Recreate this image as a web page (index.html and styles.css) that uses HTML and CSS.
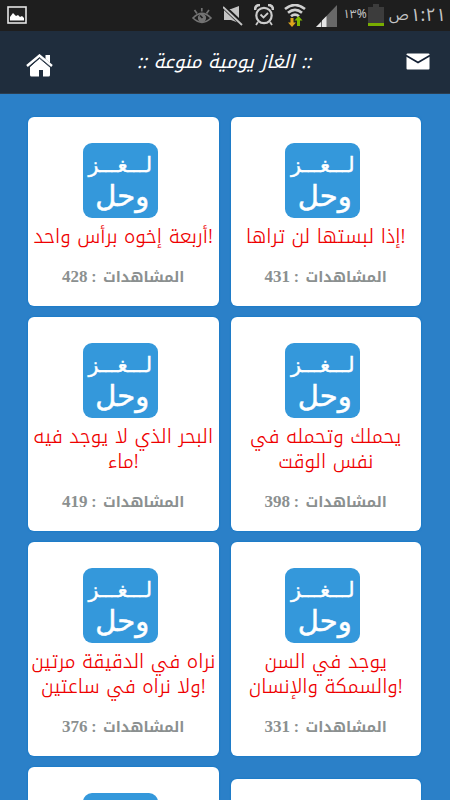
FILE: index.html
```html
<!DOCTYPE html>
<html lang="ar">
  <head>
    <meta charset="UTF-8" />
    <meta name="viewport" content="width=device-width, initial-scale=1" />
    <title>الغاز يومية منوعة</title>
    <link rel="stylesheet" href="styles.css">
  </head>
  <body>
    <div class="status-bar">
      <svg class="status-picture" width="20" height="18" viewBox="0 0 20 18">
        <rect x="1" y="1" width="18" height="16" fill="#222" stroke="#e4e4e4" stroke-width="1.6" />
        <path d="M3 14.500V11l3-4 3 3 2-1 2 2 2-1 2 2v2.500z" fill="#fff" />
      </svg>
      <div class="status-icons">
        <svg class="eye" width="20" height="18" viewBox="0 0 20 18" fill="none" stroke="#737373" stroke-width="1.7">
          <path d="M1 11Q10 2 19 11Q10 19.500 1 11z" />
          <path d="M2.500 3l2.500 3.500M9.800 1v3.500M17 3l-2.500 3.500" />
          <circle cx="10" cy="11" r="3.300" fill="#737373" />
          <path d="M8 8.500l2.500 2.500" stroke="#1e1e1e" />
        </svg>
        <svg class="muted" width="20" height="20" viewBox="0 0 20 20">
          <path d="M1 3h7l8-3v17l-8-3H1z" fill="#c4c4c4" />
          <path d="M1 1l18 17" stroke="#1e1e1e" stroke-width="4.500" />
          <path d="M0 1l19 18" stroke="#c4c4c4" stroke-width="1.800" />
        </svg>
        <svg width="20" height="22" viewBox="0 0 20 22" fill="none" stroke="#ccc">
          <circle cx="10" cy="11.500" r="7.700" stroke-width="2.200" />
          <path d="M6.500 10.500l3 3 4.500-4.500M4 18l-2 3M16 18l2 3" stroke-width="1.800" />
          <path d="M1 6Q1 1 6 1M14 1q5 0 5 5" stroke-width="2.600" />
        </svg>
        <svg width="22" height="24" viewBox="0 0 22 24" fill="none" stroke="#d0d0d0" stroke-width="2.600">
          <path d="M1 5Q11-3 21 5M4 8.800Q11 3 18 8.800M7 12.300Q11 9 15 12.300" />
          <path d="M8 23l-4-4.500h2.500V14h3v4.500H12z" fill="#dda51c" stroke="none" />
          <path d="M14.500 12l-4 4.500H13V22h3v-5.500h2.500z" fill="#80b900" stroke="none" />
        </svg>
        <svg class="signal" width="22" height="22" viewBox="0 0 22 22">
          <path d="M0 22L21 0v22z" fill="#686868" />
          <path d="M0 22l5-5v5zM6 22v-6.500l4.500-4.500v11z" fill="#e5e5e5" />
        </svg>
        <span class="battery-level">١٣%</span>
        <svg width="16" height="22" viewBox="0 0 16 22">
          <path d="M5 0h6v3h5v19H0V3h5z" fill="#3c3c3c" />
          <path d="M0 19h16v3H0z" fill="#78ad00" />
        </svg>
        <span class="clock"><span>١:٢١</span><span class="clock-period">ص</span></span>
      </div>
    </div>

    <header class="header">
      <svg class="home" width="28" height="23" viewBox="0 0 28 23">
        <path d="M4 13L14 4l10 9v8q0 1.500-1.500 1.500H17V16h-4v6.500H5.500Q4 22.500 4 21z" fill="#fff" />
        <path d="M19.500 1H24v8l-4.500-4z" fill="#fff" />
        <path d="M1 12L13.500 1.500 26 12" fill="none" stroke="#fff" stroke-width="2.400" />
        <path d="M2.500 13.500L13.500 4.200 24.500 13.500" fill="none" stroke="#1f2d3d" stroke-width="1" />
      </svg>
      <h1>:: الغاز يومية منوعة ::</h1>
      <svg class="mail" width="24" height="17" viewBox="0 0 24 17">
        <rect x=".5" y=".5" width="23" height="16" rx="1" fill="#fff" />
        <path d="M0 2.500L12 9.500l12-7" fill="none" stroke="#132034" stroke-width="1.800" />
      </svg>
    </header>

    <main class="riddles">
      <div class="column">
        <article class="card">
          <div class="logo"><span class="logo-top">لـــغـــز</span><span class="logo-bottom">وحل</span></div>
          <h2><span>أربعة إخوه برأس واحد!</span></h2>
          <p class="views"><span>المشاهدات :</span> 428</p>
        </article>
        <article class="card">
          <div class="logo"><span class="logo-top">لـــغـــز</span><span class="logo-bottom">وحل</span></div>
          <h2><span>البحر الذي لا يوجد فيه</span><span>ماء!</span></h2>
          <p class="views"><span>المشاهدات :</span> 419</p>
        </article>
        <article class="card">
          <div class="logo"><span class="logo-top">لـــغـــز</span><span class="logo-bottom">وحل</span></div>
          <h2><span>نراه في الدقيقة مرتين</span><span>ولا نراه في ساعتين!</span></h2>
          <p class="views"><span>المشاهدات :</span> 376</p>
        </article>
        <article class="card card-cut">
          <div class="logo"></div>
        </article>
      </div>
      <div class="column">
        <article class="card">
          <div class="logo"><span class="logo-top">لـــغـــز</span><span class="logo-bottom">وحل</span></div>
          <h2><span>إذا لبستها لن تراها!</span></h2>
          <p class="views"><span>المشاهدات :</span> 431</p>
        </article>
        <article class="card">
          <div class="logo"><span class="logo-top">لـــغـــز</span><span class="logo-bottom">وحل</span></div>
          <h2><span>يحملك وتحمله في</span><span>نفس الوقت</span></h2>
          <p class="views"><span>المشاهدات :</span> 398</p>
        </article>
        <article class="card">
          <div class="logo"><span class="logo-top">لـــغـــز</span><span class="logo-bottom">وحل</span></div>
          <h2><span>يوجد في السن</span><span>والسمكة والإنسان!</span></h2>
          <p class="views"><span>المشاهدات :</span> 331</p>
        </article>
        <article class="card card-cut card-late"></article>
      </div>
    </main>
  </body>
</html>
```
FILE: styles.css
```css
* {
  box-sizing: border-box;
}
body {
  margin: 0;
  height: 800px;
  overflow: hidden;
  display: flex;
  flex-direction: column;
  background: #2b80c8;
  font-family: "Noto Kufi Arabic", "DejaVu Sans", sans-serif;
}
svg {
  display: block;
  flex: none;
}
.status-bar {
  height: 31px;
  flex: none;
  display: flex;
  justify-content: space-between;
  padding: 6px 4px 0 7px;
  background: #1e1e1e;
  color: #c6c6c6;
}
.status-icons {
  display: flex;
  gap: 10px;
  margin-top: -2px;
}
.eye {
  margin-top: 3px;
  margin-left: -5px;
  margin-right: 1px;
}
.muted {
  margin-top: 2px;
  margin-right: 1px;
}
.signal {
  margin-top: 1px;
}
.battery-level {
  width: 22px;
  margin-left: -5px;
  margin-right: -7px;
  font-family: "Noto Sans Arabic", "DejaVu Sans", sans-serif;
  font-size: 12px;
  line-height: 22px;
  white-space: nowrap;
}
.clock {
  display: flex;
  justify-content: space-between;
  width: 57px;
  margin-left: -5px;
  font-family: "Noto Sans Arabic", "DejaVu Sans", sans-serif;
  font-size: 18px;
  line-height: 22px;
  direction: rtl;
}
.clock-period {
  font-size: 15px;
}
.header {
  height: 63px;
  flex: none;
  display: flex;
  align-items: center;
  justify-content: space-between;
  padding: 0 20px 0 26px;
  background: #1f2d3d;
  border-bottom: 1px solid #2c3e50;
}
.home {
  margin-top: 6px;
}
.mail {
  margin-top: -1px;
}
h1 {
  flex: 1;
  margin: 0 12px 0 0;
  font-size: 18.600px;
  line-height: 30px;
  font-weight: normal;
  font-style: italic;
  text-align: center;
  color: #fff;
  white-space: nowrap;
}
.riddles {
  flex: 1;
  min-height: 0;
  display: flex;
  gap: 12px;
  padding: 23px 29px 0 28px;
}
.column {
  flex: 1;
  display: flex;
  flex-direction: column;
  gap: 11px;
}
.card {
  display: flex;
  flex-direction: column;
  align-items: center;
  height: 214px;
  flex: none;
  padding-top: 26px;
  border-radius: 6px;
  background: #fff;
  box-shadow: 0 0 2px #0071c8;
}
.card:first-child {
  height: 189px;
}
.card-cut {
  height: 33px;
  border-radius: 6px 6px 0 0;
  overflow: hidden;
}
.card-late {
  height: 21px;
  margin-top: 12px;
}
.logo {
  width: 75px;
  height: 75px;
  flex: none;
  display: flex;
  flex-direction: column;
  align-items: center;
  margin-right: 6px;
  padding-top: 6px;
  border-radius: 9px;
  background: #3498db;
  color: #fff;
  font-family: "DejaVu Sans", sans-serif;
  font-size: 20.500px;
  line-height: 32px;
  -webkit-text-stroke: 0.5px #fff;
}
.logo-bottom {
  font-size: 29px;
  line-height: 30px;
  margin-left: 4px;
}
h2 {
  margin: 6px 0 0;
  font-size: 19.400px;
  line-height: 25px;
  font-weight: 300;
  color: #ee0000;
}
h2 span {
  display: block;
  text-align: center;
  white-space: nowrap;
}
.views {
  margin: 15px 0 0;
  font-family: "Liberation Serif", serif;
  font-size: 17px;
  line-height: 25px;
  font-weight: bold;
  color: #8b9090;
}
.views span {
  font-family: "Noto Kufi Arabic", "DejaVu Sans", sans-serif;
  font-size: 14.700px;
  word-spacing: 2px;
}
```
